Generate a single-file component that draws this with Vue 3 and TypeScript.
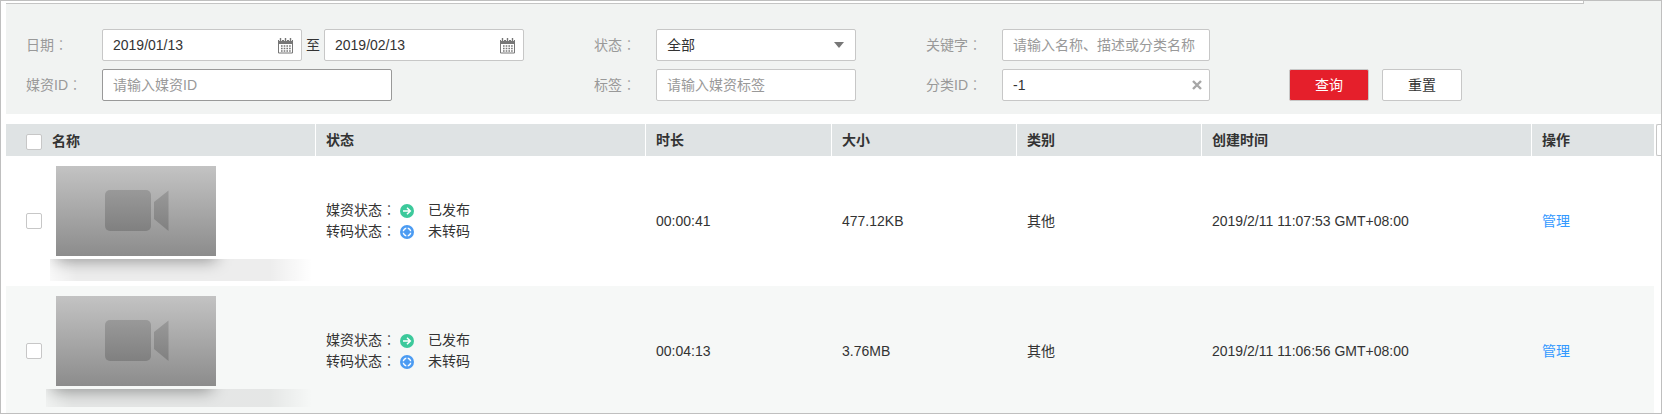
<script setup lang="ts">
import { ref } from 'vue'

interface Media {
  id: number
  duration: string
  size: string
  category: string
  created: string
  checked: boolean
}

const startDate = ref('2019/01/13')
const endDate = ref('2019/02/13')
const mediaId = ref('')
const status = ref('全部')
const tag = ref('')
const keyword = ref('')
const categoryId = ref('-1')
const allChecked = ref(false)

const rows = ref<Media[]>([
  { id: 1, duration: '00:00:41', size: '477.12KB', category: '其他', created: '2019/2/11 11:07:53 GMT+08:00', checked: false },
  { id: 2, duration: '00:04:13', size: '3.76MB', category: '其他', created: '2019/2/11 11:06:56 GMT+08:00', checked: false },
])

function toggleAll(): void {
  rows.value.forEach((r) => (r.checked = allChecked.value))
}

function reset(): void {
  mediaId.value = ''
  tag.value = ''
  keyword.value = ''
  status.value = '全部'
}
</script>

<template>
  <main class="page">
    <div class="strip"></div>
    <form class="filters" @submit.prevent>
      <div class="cell">
        <label class="label" for="start">日期<span class="colon">：</span></label>
        <div class="box">
          <input id="start" v-model="startDate" type="text" />
          <button type="button" class="icon-btn" aria-label="选择开始日期">
            <svg width="17" height="17" viewBox="0 0 17 17">
              <path d="M1 3h15v4H1z" fill="#777" />
              <path d="M3.5 0v4M8.5 0v4M13.5 0v4" stroke="#fff" stroke-width="3" />
              <path d="M3.5 1v4M8.5 1v4M13.5 1v4" stroke="#777" stroke-width="1.4" />
              <path d="M1.5 5.5v10.5h14V5.5" fill="none" stroke="#777" />
              <path d="M4 9h10M4 11.5h10M4 14h10" stroke="#777" stroke-width="1.4" stroke-dasharray="1.6 1.1" />
            </svg>
          </button>
        </div>
        <label class="to" for="end">至</label>
        <div class="box">
          <input id="end" v-model="endDate" type="text" />
          <button type="button" class="icon-btn" aria-label="选择结束日期">
            <svg width="17" height="17" viewBox="0 0 17 17">
              <path d="M1 3h15v4H1z" fill="#777" />
              <path d="M3.5 0v4M8.5 0v4M13.5 0v4" stroke="#fff" stroke-width="3" />
              <path d="M3.5 1v4M8.5 1v4M13.5 1v4" stroke="#777" stroke-width="1.4" />
              <path d="M1.5 5.5v10.5h14V5.5" fill="none" stroke="#777" />
              <path d="M4 9h10M4 11.5h10M4 14h10" stroke="#777" stroke-width="1.4" stroke-dasharray="1.6 1.1" />
            </svg>
          </button>
        </div>
      </div>
      <div class="cell">
        <label class="label short" for="status">状态<span class="colon">：</span></label>
        <div class="box">
          <select id="status" v-model="status">
            <option>全部</option>
          </select>
          <svg class="caret" width="10" height="6" viewBox="0 0 10 6"><path d="M0 0h10L5 6z" fill="#777" /></svg>
        </div>
      </div>
      <div class="cell">
        <label class="label" for="keyword">关键字<span class="colon">：</span></label>
        <div class="box wide">
          <input id="keyword" v-model="keyword" type="text" placeholder="请输入名称、描述或分类名称" />
        </div>
      </div>
      <div class="cell"></div>
      <div class="cell">
        <label class="label" for="media">媒资ID<span class="colon">：</span></label>
        <div class="box media">
          <input id="media" v-model="mediaId" type="text" placeholder="请输入媒资ID" />
        </div>
      </div>
      <div class="cell">
        <label class="label short" for="tag">标签<span class="colon">：</span></label>
        <div class="box">
          <input id="tag" v-model="tag" type="text" placeholder="请输入媒资标签" />
        </div>
      </div>
      <div class="cell">
        <label class="label" for="category">分类ID<span class="colon">：</span></label>
        <div class="box wide">
          <input id="category" v-model="categoryId" type="text" />
          <button type="button" class="icon-btn" aria-label="清除" @click="categoryId = ''">
            <svg width="10" height="10" viewBox="0 0 10 10"><path d="M1 1l8 8M9 1l-8 8" stroke="#a6a6a6" stroke-width="2.4" /></svg>
          </button>
        </div>
      </div>
      <div class="cell actions">
        <button type="submit" class="btn primary">查询</button>
        <button type="button" class="btn" @click="reset">重置</button>
      </div>
    </form>

    <section class="list">
      <table>
        <colgroup>
          <col class="c-name" /><col class="c-long" /><col class="c-duration" /><col class="c-mid" />
          <col class="c-mid" /><col class="c-long" /><col class="c-op" />
        </colgroup>
        <thead>
          <tr>
            <th scope="col">
              <label class="head-name"><input v-model="allChecked" type="checkbox" @change="toggleAll" />名称</label>
            </th>
            <th scope="col">状态</th>
            <th scope="col">时长</th>
            <th scope="col">大小</th>
            <th scope="col">类别</th>
            <th scope="col">创建时间</th>
            <th scope="col">操作</th>
          </tr>
        </thead>
        <tbody>
          <tr v-for="row in rows" :key="row.id">
            <td class="name">
              <div class="name-in">
                <input v-model="row.checked" type="checkbox" aria-label="选择媒资" />
                <div class="preview">
                  <svg class="thumb" viewBox="0 0 160 90" role="img" aria-label="视频">
                    <defs>
                      <linearGradient :id="'bg' + row.id" x1="0" y1="0" x2="0" y2="1">
                        <stop offset="0" stop-color="#c3c3c3" />
                        <stop offset="1" stop-color="#8c8c8c" />
                      </linearGradient>
                      <linearGradient :id="'cam' + row.id" x1="0" y1="0" x2="0" y2="1">
                        <stop offset="0" stop-color="#999" />
                        <stop offset="1" stop-color="#808080" />
                      </linearGradient>
                    </defs>
                    <rect width="160" height="90" :fill="`url(#bg${row.id})`" />
                    <rect x="49" y="24" width="46" height="41" rx="5" :fill="`url(#cam${row.id})`" />
                    <path d="M112.5 24.5V65L98 53V36z" :fill="`url(#cam${row.id})`" />
                  </svg>
                  <div class="masked" :class="{ low: row.id === 2 }"></div>
                </div>
              </div>
            </td>
            <td>
              <div class="state">
                <span>媒资状态<span class="colon">：</span></span>
                <svg width="14" height="14" viewBox="0 0 14 14">
                  <circle cx="7" cy="7" r="7" fill="#3cc99b" />
                  <path d="M3 7h7M7 3.8L10.3 7 7 10.2" fill="none" stroke="#fff" stroke-width="1.5" />
                </svg>
                <span>已发布</span>
              </div>
              <div class="state">
                <span>转码状态<span class="colon">：</span></span>
                <svg width="14" height="14" viewBox="0 0 14 14">
                  <circle cx="7" cy="7" r="7" fill="#4b9bf2" />
                  <circle cx="7" cy="7" r="3.7" fill="none" stroke="#fff" stroke-width="1.5" />
                  <path d="M7 2v3M7 9v3M2 7h3M9 7h3" stroke="#4b9bf2" stroke-width="1.4" />
                </svg>
                <span>未转码</span>
              </div>
            </td>
            <td>{{ row.duration }}</td>
            <td>{{ row.size }}</td>
            <td>{{ row.category }}</td>
            <td>{{ row.created }}</td>
            <td><a href="#">管理</a></td>
          </tr>
        </tbody>
      </table>
      <button type="button" class="column-toggle" aria-label="设置列"></button>
    </section>
  </main>
</template>

<style>
body {
  margin: 0;
  background: #fff;
}
</style>

<style scoped>
* {
  box-sizing: border-box;
}
.page {
  height: 100vh;
  overflow: hidden;
  padding-left: 5px;
  border: 1px solid #bfbfbf;
  background: #fff;
  color: #333;
  font: 14px/21px "Liberation Sans", "Noto Sans CJK SC", sans-serif;
}
input,
select,
button {
  font: inherit;
  color: inherit;
}
.colon {
  font-family: "Noto Sans CJK JP", sans-serif;
  font-weight: 300;
  line-height: 1;
}
.strip {
  height: 3px;
  margin-right: 77px;
  border: solid #c4c4c4;
  border-width: 0 1px 1px 0;
  box-shadow: 80px 0 0 #f1f3f2;
}
.filters {
  display: grid;
  grid-template-columns: 568fr 332fr 363fr 372fr;
  row-gap: 8px;
  padding: 25px 0 13px 20px;
  background: #f1f3f2;
}
.cell {
  display: flex;
  align-items: center;
  min-width: 0;
}
.label {
  flex: none;
  width: 76px;
  color: #999;
}
.short {
  width: 62px;
}
.to {
  width: 22px;
  text-align: center;
}
.box {
  position: relative;
  display: flex;
  align-items: center;
  width: 200px;
  height: 32px;
  border: 1px solid #c7c7c7;
  border-radius: 2px;
  background: #fff;
}
.wide {
  width: 208px;
}
.media {
  width: 290px;
  border-color: #999;
}
.box input,
.box select {
  flex: 1;
  min-width: 0;
  height: 30px;
  padding: 0 10px;
  border: 0;
  outline: 0;
  background: transparent;
  appearance: none;
}
.box input::placeholder {
  color: #999;
  opacity: 1;
}
.caret {
  position: absolute;
  right: 11px;
  pointer-events: none;
}
.icon-btn {
  display: flex;
  flex: none;
  padding: 0;
  margin-right: 7px;
  border: 0;
  background: none;
}
.actions {
  gap: 13px;
}
.btn {
  width: 80px;
  height: 32px;
  padding: 0;
  border: 1px solid #c7c7c7;
  border-radius: 2px;
  background: #fff;
}
.primary {
  background: #e51f2b;
  color: #fff;
}
.list {
  display: flex;
  align-items: flex-start;
  gap: 2px;
  margin-top: 10px;
}
table {
  flex: 1;
  width: 100%;
  table-layout: fixed;
  border-collapse: collapse;
}
.c-name { width: 310px; }
.c-long { width: 330px; }
.c-duration { width: 186px; }
.c-mid { width: 185px; }
.c-op { width: 122px; }
th,
td {
  padding: 0 10px;
  text-align: left;
}
th {
  height: 32px;
  background: linear-gradient(#fff, #fff) right / 1px 100% no-repeat #dfe3e4;
  font-weight: bold;
}
th:last-child {
  background: #dfe3e4;
}
th:first-child,
td:first-child {
  padding: 0 0 0 20px;
}
.head-name {
  display: flex;
  align-items: center;
  gap: 10px;
  padding-top: 3px;
}
input[type='checkbox'] {
  flex: none;
  width: 16px;
  height: 16px;
  margin: 0;
  border: 1px solid #c7c7c7;
  border-radius: 2px;
  background: #fff;
  appearance: none;
}
input[type='checkbox']:checked {
  background: #e51f2b;
}
td {
  height: 130px;
}
tbody tr:nth-child(even) {
  background: #f6f8f7;
}
.name {
  vertical-align: top;
}
.name-in {
  display: flex;
  align-items: center;
  gap: 4px;
  height: 130px;
}
.preview {
  align-self: flex-start;
  padding-top: 10px;
}
.thumb {
  display: block;
  width: 160px;
  height: 90px;
  margin: 0 0 3px 10px;
}
.masked {
  position: relative;
  overflow: hidden;
  width: 262px;
  height: 22px;
  margin-left: 4px;
  background: linear-gradient(90deg, #00000006, #00000012 10% 84%, transparent);
}
.masked::before {
  content: '';
  position: absolute;
  top: -20px;
  left: 6px;
  width: 160px;
  height: 22px;
  background: #00000060;
  filter: blur(8px);
}
.low {
  width: 266px;
  height: 18px;
  margin-left: 0;
}
.state {
  display: flex;
  align-items: center;
  height: 21px;
}
.state svg {
  margin: 0 14px 0 4px;
}
a {
  color: #39f;
  text-decoration: none;
}
.column-toggle {
  width: 5px;
  height: 32px;
  padding: 0;
  border: 1px solid #c7c7c7;
  border-right: 0;
  border-radius: 2px 0 0 2px;
  background: #fff;
}
</style>
